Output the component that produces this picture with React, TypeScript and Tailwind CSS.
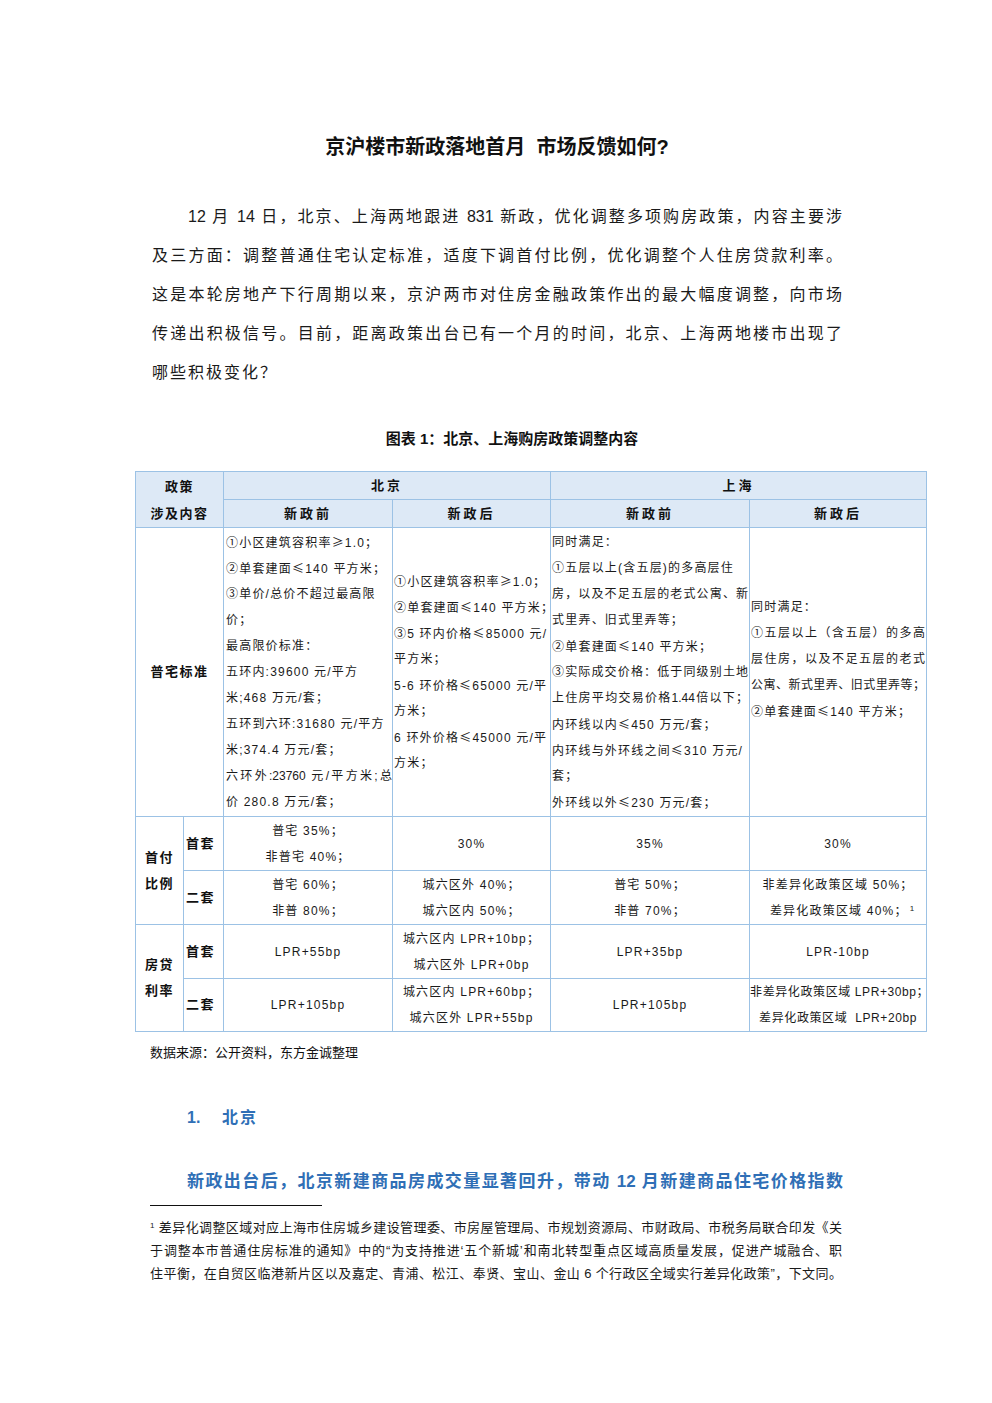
import React from "react";

type Line = { t: string; j?: boolean };

const font = "font-['Liberation_Sans','Noto_Sans_CJK_SC',sans-serif]";
const bd = "border border-[#9cc2e5]";

// ≤ / ≥ look full-width in the source, so give them the CJK face
function sym(t: string) {
  return t.split(/([≤≥])/).map((p, i) =>
    p === "≤" || p === "≥" ? (
      <span key={i} className="font-['Noto_Sans_CJK_SC',sans-serif]">
        {p}
      </span>
    ) : (
      <React.Fragment key={i}>{p}</React.Fragment>
    )
  );
}

function Lines({ lines, center }: { lines: Line[]; center?: boolean }) {
  return (
    <div className={`text-[12px] leading-[26px] tracking-[1.2px] text-[#1a1a1a] ${center ? "text-center" : "text-left"}`}>
      {lines.map((l, i) => (
        <div key={i} className={`h-[26px] whitespace-nowrap ${l.j ? "[text-align-last:justify] tracking-normal" : ""}`}>
          {l.t === "" ? "\u00a0" : sym(l.t)}
        </div>
      ))}
    </div>
  );
}

function Head({ children }: { children: React.ReactNode }) {
  return <div className="text-[13px] font-bold tracking-[3px] text-[#111]">{children}</div>;
}

function Label({ children }: { children: React.ReactNode }) {
  return <div className="text-[13px] font-bold tracking-[1.5px] text-[#111]">{children}</div>;
}

const bjBefore: Line[] = [
  { t: "①小区建筑容积率≥1.0；" },
  { t: "②单套建面≤140 平方米；" },
  { t: "③单价/总价不超过最高限" },
  { t: "价；" },
  { t: "最高限价标准：" },
  { t: "五环内:39600 元/平方" },
  { t: "米;468 万元/套；" },
  { t: "五环到六环:31680 元/平方" },
  { t: "米;374.4 万元/套；" },
  { t: "六环外:23760 元/平方米;总", j: true },
  { t: "价 280.8 万元/套；" },
];

const bjAfter: Line[] = [
  { t: "①小区建筑容积率≥1.0；" },
  { t: "②单套建面≤140 平方米；" },
  { t: "③5 环内价格≤85000 元/" },
  { t: "平方米；" },
  { t: "5-6 环价格≤65000 元/平" },
  { t: "方米；" },
  { t: "6 环外价格≤45000 元/平" },
  { t: "方米；" },
];

const shBefore: Line[] = [
  { t: "同时满足：" },
  { t: "①五层以上(含五层)的多高层住" },
  { t: "房，以及不足五层的老式公寓、新", j: true },
  { t: "式里弄、旧式里弄等；" },
  { t: "②单套建面≤140 平方米；" },
  { t: "③实际成交价格：低于同级别土地", j: true },
  { t: "上住房平均交易价格1.44倍以下；", j: true },
  { t: "内环线以内≤450 万元/套；" },
  { t: "内环线与外环线之间≤310 万元/" },
  { t: "套；" },
  { t: "外环线以外≤230 万元/套；" },
];

const shAfter: Line[] = [
  { t: "同时满足：" },
  { t: "①五层以上（含五层）的多高", j: true },
  { t: "层住房，以及不足五层的老式", j: true },
  { t: "公寓、新式里弄、旧式里弄等；", j: true },
  { t: "②单套建面≤140 平方米；" },
  { t: "" },
];

const para = [
  { t: "12 月 14 日，北京、上海两地跟进 831 新政，优化调整多项购房政策，内容主要涉", j: true, indent: true },
  { t: "及三方面：调整普通住宅认定标准，适度下调首付比例，优化调整个人住房贷款利率。", j: true },
  { t: "这是本轮房地产下行周期以来，京沪两市对住房金融政策作出的最大幅度调整，向市场", j: true },
  { t: "传递出积极信号。目前，距离政策出台已有一个月的时间，北京、上海两地楼市出现了", j: true },
  { t: "哪些积极变化？", j: false },
];

const foot = [
  { t: "差异化调整区域对应上海市住房城乡建设管理委、市房屋管理局、市规划资源局、市财政局、市税务局联合印发《关", sup: true },
  { t: "于调整本市普通住房标准的通知》中的“为支持推进‘五个新城’和南北转型重点区域高质量发展，促进产城融合、职" },
  { t: "住平衡，在自贸区临港新片区以及嘉定、青浦、松江、奉贤、宝山、金山 6 个行政区全域实行差异化政策”，下文同。" },
];

export default function App() {
  return (
    <div className={`w-[992px] h-[1403px] bg-white overflow-hidden ${font}`}>
      <div className="pt-[133px]">
        <h1 className="text-center text-[20px] leading-[28px] font-bold text-[#111] pl-[2px]">
          京沪楼市新政落地首月&nbsp;&nbsp;市场反馈如何?
        </h1>

        <div className="ml-[152px] w-[690px] mt-[36px] text-[16px] leading-[39px] text-[#1a1a1a]">
          {para.map((l, i) => (
            <div
              key={i}
              className={`whitespace-nowrap ${l.j ? "[text-align-last:justify]" : "tracking-[2px]"} ${l.indent ? "pl-[36px]" : ""}`}
            >
              {l.t}
            </div>
          ))}
        </div>

        <div className="mt-[36px] text-center text-[15px] leading-[22px] font-bold text-[#111] pl-[32px]">
          图表 1：北京、上海购房政策调整内容
        </div>

        <table className="ml-[135px] mt-[21px] w-[791px] table-fixed border-collapse border border-[#8fb7e0]">
          <colgroup>
            <col className="w-[48px]" />
            <col className="w-[40px]" />
            <col className="w-[169px]" />
            <col className="w-[158px]" />
            <col className="w-[199px]" />
            <col className="w-[177px]" />
          </colgroup>
          <tbody>
            <tr className="h-[28px] bg-[#dde9f6]">
              <td rowSpan={2} colSpan={2} className={`${bd} text-center p-0`}>
                <div className="text-[13px] font-bold tracking-[1.5px] leading-[27px] text-[#111]">
                  <div>政策</div>
                  <div>涉及内容</div>
                </div>
              </td>
              <td colSpan={2} className={`${bd} text-center p-0`}>
                <Head>北京</Head>
              </td>
              <td colSpan={2} className={`${bd} text-center p-0`}>
                <Head>上海</Head>
              </td>
            </tr>
            <tr className="h-[28px] bg-[#dde9f6]">
              <td className={`${bd} text-center p-0`}>
                <Head>新政前</Head>
              </td>
              <td className={`${bd} text-center p-0`}>
                <Head>新政后</Head>
              </td>
              <td className={`${bd} text-center p-0`}>
                <Head>新政前</Head>
              </td>
              <td className={`${bd} text-center p-0`}>
                <Head>新政后</Head>
              </td>
            </tr>

            <tr className="h-[289px]">
              <td colSpan={2} className={`${bd} text-center p-0`}>
                <Label>普宅标准</Label>
              </td>
              <td className={`${bd} align-middle pl-[2px] pr-0 py-0`}>
                <Lines lines={bjBefore} />
              </td>
              <td className={`${bd} align-middle pl-[1px] pr-0 py-0`}>
                <Lines lines={bjAfter} />
              </td>
              <td className={`${bd} align-middle px-[1px] py-0`}>
                <Lines lines={shBefore} />
              </td>
              <td className={`${bd} align-middle px-[1px] py-0`}>
                <Lines lines={shAfter} />
              </td>
            </tr>

            <tr className="h-[54px]">
              <td rowSpan={2} className={`${bd} text-center p-0`}>
                <div className="text-[13px] font-bold tracking-[1.5px] leading-[26px] text-[#111]">
                  <div>首付</div>
                  <div>比例</div>
                </div>
              </td>
              <td className={`${bd} p-0 pl-[2px]`}>
                <Label>首套</Label>
              </td>
              <td className={`${bd} p-0`}>
                <Lines center lines={[{ t: "普宅 35%；" }, { t: "非普宅 40%；" }]} />
              </td>
              <td className={`${bd} p-0`}>
                <Lines center lines={[{ t: "30%" }]} />
              </td>
              <td className={`${bd} p-0`}>
                <Lines center lines={[{ t: "35%" }]} />
              </td>
              <td className={`${bd} p-0`}>
                <Lines center lines={[{ t: "30%" }]} />
              </td>
            </tr>
            <tr className="h-[54px]">
              <td className={`${bd} p-0 pl-[2px]`}>
                <Label>二套</Label>
              </td>
              <td className={`${bd} p-0`}>
                <Lines center lines={[{ t: "普宅 60%；" }, { t: "非普 80%；" }]} />
              </td>
              <td className={`${bd} p-0`}>
                <Lines center lines={[{ t: "城六区外 40%；" }, { t: "城六区内 50%；" }]} />
              </td>
              <td className={`${bd} p-0`}>
                <Lines center lines={[{ t: "普宅 50%；" }, { t: "非普 70%；" }]} />
              </td>
              <td className={`${bd} p-0`}>
                <div className="text-[12px] leading-[26px] tracking-[1.2px] text-center text-[#1a1a1a] whitespace-nowrap">
                  <div className="h-[26px]">非差异化政策区域 50%；</div>
                  <div className="h-[26px] pl-[8px]">
                    差异化政策区域 40%；<sup className="text-[8px] leading-none ml-[2px] tracking-normal">1</sup>
                  </div>
                </div>
              </td>
            </tr>

            <tr className="h-[54px]">
              <td rowSpan={2} className={`${bd} text-center p-0`}>
                <div className="text-[13px] font-bold tracking-[1.5px] leading-[26px] text-[#111]">
                  <div>房贷</div>
                  <div>利率</div>
                </div>
              </td>
              <td className={`${bd} p-0 pl-[2px]`}>
                <Label>首套</Label>
              </td>
              <td className={`${bd} p-0`}>
                <Lines center lines={[{ t: "LPR+55bp" }]} />
              </td>
              <td className={`${bd} p-0`}>
                <Lines center lines={[{ t: "城六区内 LPR+10bp；" }, { t: "城六区外  LPR+0bp" }]} />
              </td>
              <td className={`${bd} p-0`}>
                <Lines center lines={[{ t: "LPR+35bp" }]} />
              </td>
              <td className={`${bd} p-0`}>
                <Lines center lines={[{ t: "LPR-10bp" }]} />
              </td>
            </tr>
            <tr className="h-[53px]">
              <td className={`${bd} p-0 pl-[2px]`}>
                <Label>二套</Label>
              </td>
              <td className={`${bd} p-0`}>
                <Lines center lines={[{ t: "LPR+105bp" }]} />
              </td>
              <td className={`${bd} p-0`}>
                <Lines center lines={[{ t: "城六区内 LPR+60bp；" }, { t: "城六区外 LPR+55bp" }]} />
              </td>
              <td className={`${bd} p-0`}>
                <Lines center lines={[{ t: "LPR+105bp" }]} />
              </td>
              <td className={`${bd} p-0`}>
                <div className="text-[12px] leading-[26px] tracking-[0.6px] text-center text-[#1a1a1a] whitespace-nowrap">
                  <div>非差异化政策区域 LPR+30bp；</div>
                  <div>差异化政策区域&nbsp;&nbsp;LPR+20bp</div>
                </div>
              </td>
            </tr>
          </tbody>
        </table>

        <div className="ml-[150px] mt-[11px] text-[13px] leading-[20px] text-[#111]">
          数据来源：公开资料，东方金诚整理
        </div>

        <div className="ml-[187px] mt-[43px] flex text-[16px] leading-[24px] font-bold text-[#2f6fb6]">
          <span className="w-[35px]">1.</span>
          <span className="tracking-[2px]">北京</span>
        </div>

        <div className="ml-[187px] mt-[40px] w-[656px] text-[17px] leading-[24px] font-bold text-[#2f6fb6] whitespace-nowrap [text-align-last:justify]">
          新政出台后，北京新建商品房成交量显著回升，带动 12 月新建商品住宅价格指数
        </div>

        <div className="ml-[150px] mt-[11px] w-[172px] border-t border-[#111]" />

        <div className="ml-[150px] mt-[10px] w-[692px] text-[13px] leading-[23px] text-[#1a1a1a]">
          {foot.map((l, i) => (
            <div key={i} className="whitespace-nowrap [text-align-last:justify]">
              {l.sup && <sup className="text-[8px] mr-[4px]">1</sup>}
              {l.t}
            </div>
          ))}
        </div>
      </div>
    </div>
  );
}
